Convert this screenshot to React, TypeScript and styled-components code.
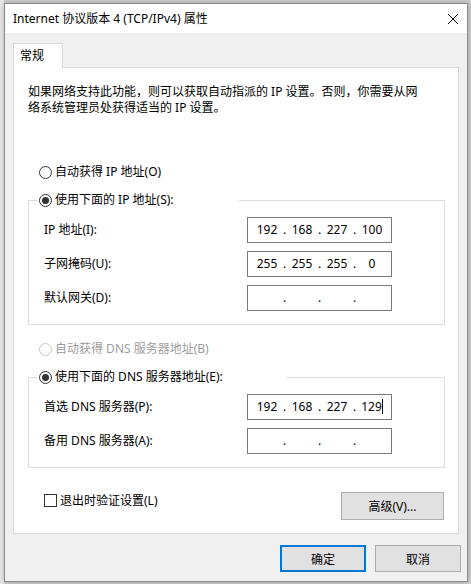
import React from "react"
import styled, { createGlobalStyle } from "styled-components"

const GlobalStyle = createGlobalStyle`
  html, body {
    margin: 0;
    padding: 0;
    background: #d8d8d8;
  }
  body {
    font-family: "Noto Sans", "Noto Sans CJK SC", sans-serif;
    font-size: 12px;
    color: #000;
  }
`

const Desktop = styled.div`
  width: 471px;
  height: 584px;
  box-sizing: border-box;
  padding: 3px 3px 2px 4px;
  background: linear-gradient(90deg, #e9e9e9 0 4px, #cfcfcf 4px);
`

const Window = styled.div`
  width: 464px;
  height: 579px;
  box-sizing: border-box;
  border: 1px solid #8a8a8a;
  background: #f0f0f0;
  display: flex;
  flex-direction: column;
  box-shadow: 0 0 6px rgba(0, 0, 0, 0.25);
`

const TitleBar = styled.div`
  height: 29px;
  background: #fff;
  display: flex;
  align-items: center;
  justify-content: space-between;
  padding: 0 8px;
  flex: none;
`

const Title = styled.span`
  font-size: 12px;
  line-height: 16px;
`

const Body = styled.div`
  flex: 1;
  display: flex;
  flex-direction: column;
  padding: 10px 8px 0 8px;
`

const TabStrip = styled.div`
  display: flex;
`

const Tab = styled.div`
  position: relative;
  z-index: 1;
  width: 50px;
  height: 25px;
  box-sizing: border-box;
  margin-bottom: -1px;
  padding: 4px 0 0 6px;
  background: #fff;
  border: 1px solid #d9d9d9;
  border-bottom: none;
  line-height: 16px;
`

const Panel = styled.div`
  height: 467px;
  box-sizing: border-box;
  background: #fff;
  border: 1px solid #d9d9d9;
  display: flex;
  flex-direction: column;
  padding: 16px 0 0 0;
`

const Description = styled.p`
  margin: 0 0 0 14px;
  width: 392px;
  line-height: 16px;
`

const RadioRow = styled.label<{ $disabled?: boolean; $top: number }>`
  display: flex;
  align-items: center;
  height: 16px;
  margin: ${(p) => p.$top}px 0 0 25px;
  color: ${(p) => (p.$disabled ? "#9d9d9d" : "#000")};
  line-height: 16px;
`

const RadioMark = styled.span<{ $checked?: boolean; $disabled?: boolean }>`
  width: 13px;
  height: 13px;
  box-sizing: border-box;
  border-radius: 50%;
  border: 1px solid ${(p) => (p.$disabled ? "#c6c6c6" : "#333")};
  background: #fff;
  display: inline-flex;
  align-items: center;
  justify-content: center;
  flex: none;
  margin-right: 3px;
  &::after {
    content: "";
    width: 7px;
    height: 7px;
    border-radius: 50%;
    background: #333;
    display: ${(p) => (p.$checked ? "block" : "none")};
  }
`

const Group = styled.fieldset`
  margin: 12px 13px 0 14px;
  padding: 9px 52px 13px 15px;
  border: 1px solid #dcdcdc;
  min-width: 0;
  display: grid;
  grid-template-columns: 1fr 145px;
  row-gap: 8px;
  align-items: center;
`

const Legend = styled.legend<{ $width: number }>`
  width: ${(p) => p.$width}px;
  box-sizing: border-box;
  height: 16px;
  padding: 0 2px;
  margin-left: -7px;
  display: flex;
  align-items: center;
  line-height: 16px;
`

const FieldLabel = styled.span`
  line-height: 16px;
`

const IpBox = styled.div`
  width: 145px;
  height: 26px;
  box-sizing: border-box;
  border: 1px solid #7a7a7a;
  background: #fff;
  display: flex;
  align-items: center;
  padding-left: 7px;
  line-height: 16px;
`

const Octet = styled.span`
  width: 24px;
  text-align: center;
  white-space: nowrap;
`

const Dot = styled.span`
  width: 11px;
  text-align: center;
`

const Caret = styled.span`
  display: inline-block;
  width: 0;
  height: 15px;
  border-left: 1px solid #000;
  vertical-align: middle;
  margin-top: -2px;
`

const OptionsRow = styled.div`
  display: flex;
  justify-content: space-between;
  align-items: flex-start;
  margin: 24px 14px 0 30px;
`

const CheckRow = styled.label`
  display: flex;
  align-items: center;
  margin-top: 2px;
  line-height: 13px;
`

const CheckBox = styled.span`
  width: 13px;
  height: 13px;
  box-sizing: border-box;
  border: 1px solid #333;
  background: #fff;
  margin-right: 3px;
  flex: none;
`

const Button = styled.button<{ $default?: boolean; $width: number; $height: number }>`
  width: ${(p) => p.$width}px;
  height: ${(p) => p.$height}px;
  box-sizing: border-box;
  background: #e1e1e1;
  border: ${(p) => (p.$default ? "2px solid #0078d7" : "1px solid #adadad")};
  font: inherit;
  color: #000;
  padding: 0;
  border-radius: 0;
`

const Footer = styled.div`
  display: flex;
  justify-content: flex-end;
  gap: 9px;
  margin: 11px -2px 0 0;
`

function CloseIcon() {
  return (
    <svg width="12" height="12" viewBox="0 0 12 12">
      <path d="M1 1 L11 11 M11 1 L1 11" stroke="#000" strokeWidth="1" fill="none" />
    </svg>
  )
}

function IpField({ parts, caret }: { parts: string[]; caret?: boolean }) {
  return (
    <IpBox>
      {parts.map((part, i) => (
        <React.Fragment key={i}>
          {i > 0 && <Dot>.</Dot>}
          <Octet>
            {part}
            {caret && i === parts.length - 1 && <Caret />}
          </Octet>
        </React.Fragment>
      ))}
    </IpBox>
  )
}

const empty = ["", "", "", ""]

export default function App() {
  return (
    <Desktop>
      <GlobalStyle />
      <Window>
        <TitleBar>
          <Title>Internet 协议版本 4 (TCP/IPv4) 属性</Title>
          <CloseIcon />
        </TitleBar>
        <Body>
          <TabStrip>
            <Tab>常规</Tab>
          </TabStrip>
          <Panel>
            <Description>
              如果网络支持此功能，则可以获取自动指派的 IP 设置。否则，你需要从网络系统管理员处获得适当的 IP 设置。
            </Description>

            <RadioRow $top={48}>
              <RadioMark />
              自动获得 IP 地址(O)
            </RadioRow>

            <Group>
              <Legend $width={202}>
                <RadioMark $checked />
                使用下面的 IP 地址(S):
              </Legend>
              <FieldLabel>IP 地址(I):</FieldLabel>
              <IpField parts={["192", "168", "227", "100"]} />
              <FieldLabel>子网掩码(U):</FieldLabel>
              <IpField parts={["255", "255", "255", "0"]} />
              <FieldLabel>默认网关(D):</FieldLabel>
              <IpField parts={empty} />
            </Group>

            <RadioRow $top={16} $disabled>
              <RadioMark $disabled />
              自动获得 DNS 服务器地址(B)
            </RadioRow>

            <Group>
              <Legend $width={249}>
                <RadioMark $checked />
                使用下面的 DNS 服务器地址(E):
              </Legend>
              <FieldLabel>首选 DNS 服务器(P):</FieldLabel>
              <IpField parts={["192", "168", "227", "129"]} caret />
              <FieldLabel>备用 DNS 服务器(A):</FieldLabel>
              <IpField parts={empty} />
            </Group>

            <OptionsRow>
              <CheckRow>
                <CheckBox />
                退出时验证设置(L)
              </CheckRow>
              <Button $width={103} $height={28}>高级(V)...</Button>
            </OptionsRow>
          </Panel>
          <Footer>
            <Button $default $width={86} $height={27}>确定</Button>
            <Button $width={86} $height={27}>取消</Button>
          </Footer>
        </Body>
      </Window>
    </Desktop>
  )
}
